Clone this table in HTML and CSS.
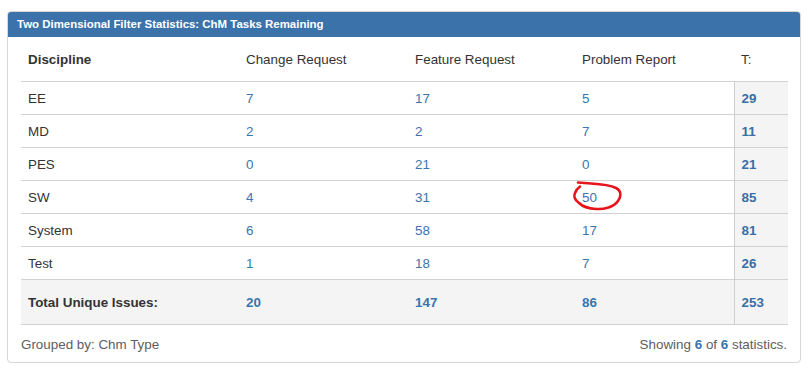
FILE: index.html
```html
<!DOCTYPE html>
<html>
<head>
<meta charset="utf-8">
<link rel="stylesheet" href="styles.css">
</head>
<body>
<div class="panel">
  <div class="panel-heading">Two Dimensional Filter Statistics: ChM Tasks Remaining</div>
  <div class="panel-body">
    <table class="stats">
      <colgroup>
        <col class="c1"><col class="c2"><col class="c3"><col class="c4"><col class="c5">
      </colgroup>
      <thead>
        <tr><th class="disc">Discipline</th><th>Change Request</th><th>Feature Request</th><th>Problem Report</th><th>T:</th></tr>
      </thead>
      <tbody>
        <tr><td>EE</td><td class="num">7</td><td class="num">17</td><td class="num">5</td><td class="tot">29</td></tr>
        <tr><td>MD</td><td class="num">2</td><td class="num">2</td><td class="num">7</td><td class="tot">11</td></tr>
        <tr><td>PES</td><td class="num">0</td><td class="num">21</td><td class="num">0</td><td class="tot">21</td></tr>
        <tr><td>SW</td><td class="num">4</td><td class="num">31</td><td class="num mark">50<svg class="circle" width="56" height="32" viewBox="0 0 56 32"><path d="M8 1.5 L21 2.5 C30 3 40 4 46 7 C52 10 51 16 48 20 C44 26 34 28.5 26 28 C18 27.5 12 25 9 22 C5 19 3 16 5 12 C6 9 8 7 10 5.5" fill="none" stroke="#e8141b" stroke-width="2.6" stroke-linecap="round" stroke-linejoin="round"/></svg></td><td class="tot">85</td></tr>
        <tr><td>System</td><td class="num">6</td><td class="num">58</td><td class="num">17</td><td class="tot">81</td></tr>
        <tr><td>Test</td><td class="num">1</td><td class="num">18</td><td class="num">7</td><td class="tot">26</td></tr>
      </tbody>
      <tfoot>
        <tr class="total"><td class="label">Total Unique Issues:</td><td class="num b">20</td><td class="num b">147</td><td class="num b">86</td><td class="tot">253</td></tr>
      </tfoot>
    </table>
    <div class="footer">
      <span class="grouped">Grouped by: Chm Type</span>
      <span class="showing">Showing <b class="hl">6</b> of <b class="hl">6</b> statistics.</span>
    </div>
  </div>
</div>
</body>
</html>
```

FILE: styles.css
```css
html, body {
  margin: 0;
  padding: 0;
  background: #fff;
}
body {
  font-family: "Liberation Sans", Arial, sans-serif;
  font-size: 13.4px;
  color: #333;
}
.panel {
  margin: 11px 5px 0 7px;
  width: 794px;
  height: 352px;
  border: 1px solid #d6d6d6;
  border-radius: 4px;
  overflow: hidden;
  box-sizing: border-box;
}
.panel-heading {
  background: #3b72aa;
  color: #fff;
  font-weight: bold;
  font-size: 11.45px;
  height: 25px;
  line-height: 25px;
  padding-left: 9px;
}
.panel-body {
  padding: 0 13px;
}
.stats {
  width: 767px;
  border-collapse: collapse;
  table-layout: fixed;
}
.c1 { width: 218px; }
.c2 { width: 169px; }
.c3 { width: 167px; }
.c4 { width: 159px; }
.c5 { width: 54px; }
.stats th {
  text-align: left;
  font-weight: normal;
  height: 44px;
  padding: 0 7px;
  border-bottom: 1px solid #d2d2d2;
}
.stats th.disc {
  font-weight: bold;
}
.stats td {
  height: 32px;
  padding: 0 7px;
  border-top: 1px solid #d2d2d2;
}
.num {
  color: #3a74ad;
}
.num.b {
  font-weight: bold;
}
.tot {
  background: #f4f4f4;
  border-left: 1px solid #cfcfcf;
  font-weight: bold;
  color: #3a6ea5;
}
.total td {
  background: #f4f4f4;
  height: 44px;
  border-bottom: 1px solid #d2d2d2;
}
.total .label {
  font-weight: bold;
}
.mark {
  position: relative;
}
.circle {
  position: absolute;
  left: -5px;
  top: 0;
}
.footer {
  display: flex;
  justify-content: space-between;
  align-items: center;
  height: 38px;
  color: #5e5e5e;
}
.hl {
  color: #3a74ad;
}
```
